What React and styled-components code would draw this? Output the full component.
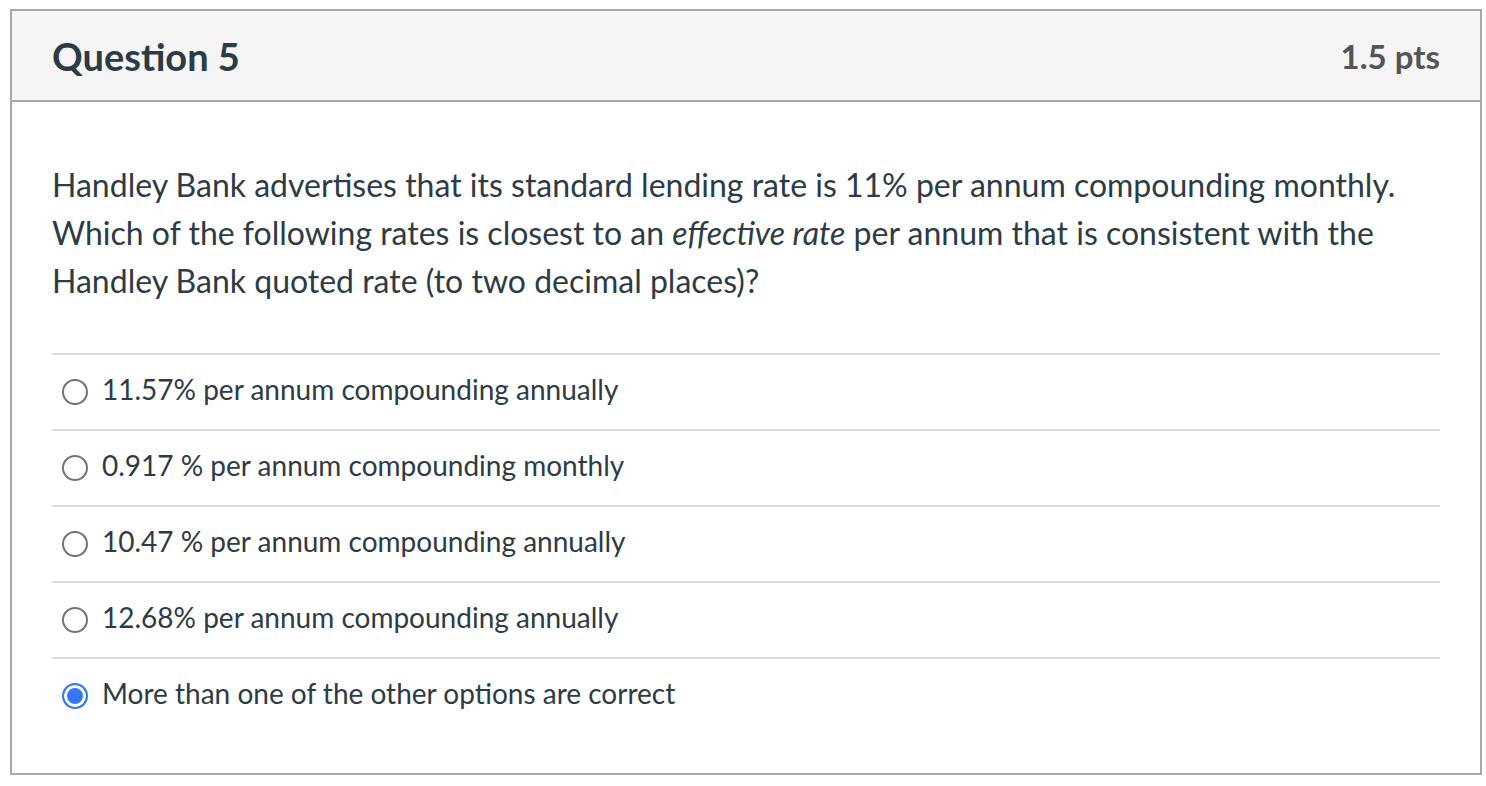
import styled, { createGlobalStyle } from "styled-components";

const GlobalStyle = createGlobalStyle`
    body{
        margin: 0;
        background: #fff;
        font-family: Lato, "Open Sans", sans-serif;
        color: #2d3b45;
    }
`;

const Card = styled.div`
    margin: 9px 0 0 10px;
    width: 1472px;
    border: 2px solid #a8a8a8;
    box-sizing: border-box;
    > .head{
        height: 91px;
        box-sizing: border-box;
        background-color: #f5f5f5;
        border-bottom: 2px solid #a8a8a8;
        padding: 0 40px 0 40px;
        display: flex;
        align-items: center;
        justify-content: space-between;
        > h2{
            margin: 0;
            font-size: 38px;
            line-height: 1;
            font-weight: 700;
            color: #2d3b45;
        }
        > span{
            margin-top: 2px;
            font-size: 33px;
            line-height: 1;
            font-weight: 700;
            color: #555;
        }
    }
    > .body{
        padding: 59px 40px 40px;
        > p{
            margin: 0 0 48px;
            font-size: 32px;
            line-height: 48px;
            > em{
                font-style: italic;
            }
        }
    }
`;

const Option = styled.label`
    display: flex;
    align-items: center;
    gap: 14px;
    padding: 13px 0 19px 10px;
    border-top: 2px solid #dcdcdc;
    font-size: 28px;
    line-height: 42px;
    cursor: pointer;
`;

const Radio = styled.span`
    flex: none;
    width: 26px;
    height: 26px;
    margin-top: 5px;
    box-sizing: border-box;
    border-radius: 50%;
    border: 2px solid ${p => (p.$checked ? "#3478f6" : "#737373")};
    background: ${p => (p.$checked ? "#3478f6" : "#fff")};
    box-shadow: ${p => (p.$checked ? "inset 0 0 0 3px #fff" : "none")};
`;

const options = [
    "11.57% per annum compounding annually",
    "0.917 % per annum compounding monthly",
    "10.47 % per annum compounding annually",
    "12.68% per annum compounding annually",
    "More than one of the other options are correct",
];

export default function App() {
    const selected = 4;
    return (
        <>
            <GlobalStyle />
            <Card>
                <div className="head">
                    <h2>Question 5</h2>
                    <span>1.5 pts</span>
                </div>
                <div className="body">
                    <p>
                        Handley Bank advertises that its standard lending rate is 11% per annum compounding monthly.
                        Which of the following rates is closest to an <em>effective rate</em> per annum that is consistent
                        with the Handley Bank quoted rate (to two decimal places)?
                    </p>
                    <div>
                        {options.map((o, i) => (
                            <Option key={i}>
                                <Radio $checked={i === selected} />
                                {o}
                            </Option>
                        ))}
                    </div>
                </div>
            </Card>
        </>
    );
}
